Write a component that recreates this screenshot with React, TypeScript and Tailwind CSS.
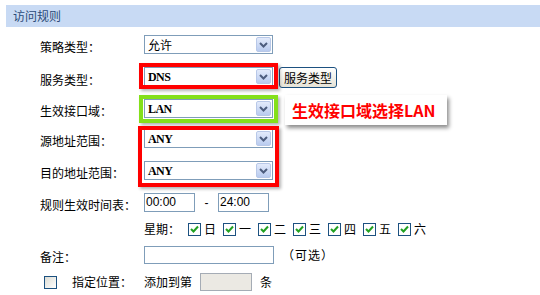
import React from "react";

const cjk = { fontFamily: '"Noto Sans CJK SC", "Noto Sans", sans-serif' };
const serif = { fontFamily: '"Liberation Serif", "Times New Roman", serif' };
const sans = { fontFamily: '"Liberation Sans", Arial, sans-serif' };

function Chevron() {
  return (
    <svg width="9" height="6" viewBox="0 0 9 6">
      <path d="M1 1 L4.5 4.5 L8 1" fill="none" stroke="#4d5d7e" strokeWidth="2" />
    </svg>
  );
}

function Select({ value, latin = false }: { value: string; latin?: boolean }) {
  return (
    <div className="w-[129px] h-[19px] border border-[#7f9db9] bg-white flex items-center justify-between">
      <span
        className={latin ? "pl-[3px] text-[12px] font-bold tracking-[-0.6px] text-black" : "pl-[3px] text-[12px] text-black"}
        style={latin ? serif : cjk}
      >
        {value}
      </span>
      <span className="w-[15px] h-[15px] mr-[1px] rounded-[2px] border border-[#b8c8e8] bg-gradient-to-b from-[#e3ebfb] to-[#b9cbef] flex items-center justify-center">
        <Chevron />
      </span>
    </div>
  );
}

function Label({ text }: { text: string }) {
  return (
    <div className="w-[104px] pt-[3px] text-[12px] leading-[19px] text-black" style={cjk}>
      {text}
    </div>
  );
}

function Check({ checked = true }: { checked?: boolean }) {
  return (
    <span className="w-[13px] h-[13px] border border-[#1c5180] bg-white flex items-center justify-center">
      {checked && (
        <svg width="9" height="8" viewBox="0 0 9 8">
          <path d="M1 4 L3.5 6.5 L8 1.5" fill="none" stroke="#21a121" strokeWidth="2" />
        </svg>
      )}
    </span>
  );
}

export default function App() {
  const days = ["日", "一", "二", "三", "四", "五", "六"];

  return (
    <div className="relative w-[540px] h-[295px] overflow-hidden bg-white text-black" style={cjk}>
      {/* header */}
      <div className="mt-[5px] ml-[6px] h-[22px] bg-[#c8daf4] flex items-center pl-[7px] text-[12px] text-[#2b4a78]">
        访问规则
      </div>

      <div className="pl-[40px]">
        <div className="mt-[8px] h-[19px] flex items-center">
          <Label text="策略类型：" />
          <Select value="允许" />
        </div>

        <div className="mt-[13px] h-[19px] flex items-start">
          <Label text="服务类型：" />
          <Select value="DNS" latin />
          <button className="ml-[6px] h-[21px] px-[4px] rounded-[3px] border border-[#1c5180] bg-gradient-to-b from-white to-[#e6e3d6] text-[12px] leading-none text-black" style={cjk}>
            服务类型
          </button>
        </div>

        <div className="mt-[13px] h-[19px] flex items-center">
          <Label text="生效接口域：" />
          <Select value="LAN" latin />
        </div>

        <div className="mt-[11px] h-[19px] flex items-center">
          <Label text="源地址范围：" />
          <Select value="ANY" latin />
        </div>

        <div className="mt-[13px] h-[19px] flex items-center">
          <Label text="目的地址范围：" />
          <Select value="ANY" latin />
        </div>

        <div className="mt-[13px] h-[19px] flex items-center">
          <Label text="规则生效时间表：" />
          <div className="w-[51px] h-[19px] border border-[#7f9db9] bg-white pl-[1px] text-[12px] leading-[17px]" style={sans}>
            00:00
          </div>
          <span className="w-[23px] text-center text-[12px]" style={sans}>-</span>
          <div className="w-[51px] h-[19px] border border-[#7f9db9] bg-white pl-[1px] text-[12px] leading-[17px]" style={sans}>
            24:00
          </div>
        </div>

        <div className="mt-[10px] h-[14px] flex items-center pl-[104px]">
          <span className="w-[44px] text-[12px]">星期：</span>
          <div className="flex items-center gap-[4px]">
            {days.map((d) => (
              <div key={d} className="w-[31px] flex items-center gap-[3px] text-[12px]">
                <Check />
                <span>{d}</span>
              </div>
            ))}
          </div>
        </div>

        <div className="mt-[10px] h-[18px] flex items-center">
          <Label text="备注：" />
          <div className="w-[130px] h-[18px] border border-[#7f9db9] bg-white" />
          <span className="ml-[8px] text-[12px] tracking-[1px]">（可选）</span>
        </div>

        <div className="mt-[9px] h-[18px] flex items-center">
          <div className="w-[32px] pl-[4px]">
            <span className="block w-[13px] h-[13px] border border-[#1c5180] bg-gradient-to-br from-[#dcdcd4] to-white" />
          </div>
          <div className="w-[72px] text-[12px]">指定位置：</div>
          <span className="w-[56px] text-[12px]">添加到第</span>
          <div className="w-[52px] h-[18px] border border-[#a5acb5] bg-[#ebe9e3]" />
          <span className="ml-[8px] text-[12px]">条</span>
        </div>
      </div>

      {/* annotation overlays */}
      <div className="absolute left-[139px] top-[63px] w-[139px] h-[26px] border-4 border-[#f00] shadow-[2px_2px_3px_rgba(0,0,0,0.3)] pointer-events-none" />
      <div className="absolute left-[139px] top-[95px] w-[139px] h-[28px] border-4 border-[#84e01a] shadow-[2px_2px_3px_rgba(0,0,0,0.3)] pointer-events-none" />
      <div className="absolute left-[138px] top-[126px] w-[141px] h-[61px] border-4 border-[#f00] shadow-[2px_2px_3px_rgba(0,0,0,0.3)] pointer-events-none" />
      <div className="absolute left-[285px] top-[95px] w-[162px] h-[30px] bg-white shadow-[2px_3px_4px_rgba(0,0,0,0.45)] flex items-center pl-[7px] text-[16px] font-bold text-[#f00]">
        生效接口域选择LAN
      </div>
    </div>
  );
}
